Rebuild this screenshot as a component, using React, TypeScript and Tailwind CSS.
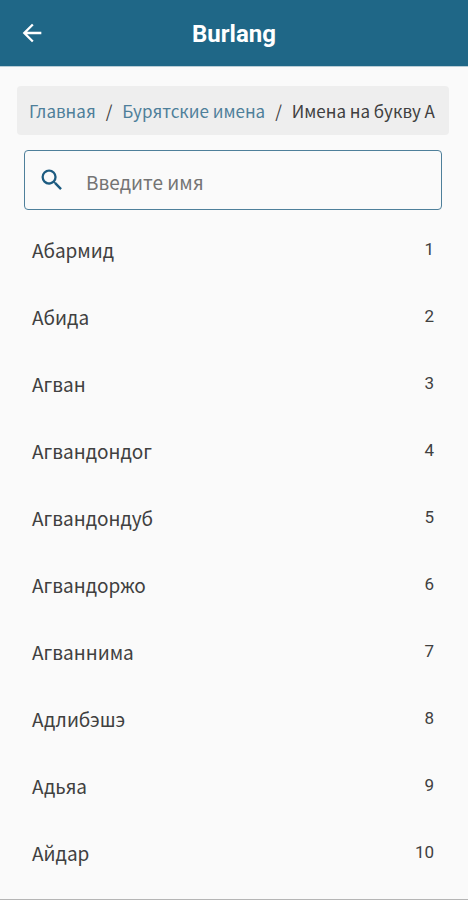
import React from "react";

const names = ["Абармид", "Абида", "Агван", "Агвандондог", "Агвандондуб", "Агвандоржо", "Агваннима", "Адлибэшэ", "Адьяа", "Айдар"];

export default function App() {
  return (
    <div className="min-h-screen overflow-hidden border-b border-[#b5b5b5] bg-[#fafafa] font-['Noto_Sans_CJK_SC','Noto_Sans',sans-serif] text-[#404040]">
      <header className="grid h-[67px] grid-cols-[64px_1fr_64px] items-center border-b border-[#b8cdd6] bg-[#1f6787] text-white">
        <button aria-label="Назад" className="flex h-12 w-16 items-center justify-center">
          <svg className="size-7" viewBox="0 0 24 24" fill="currentColor">
            <path d="M20 11H7.83l5.59-5.59L12 4l-8 8 8 8 1.41-1.41L7.83 13H20v-2z" />
          </svg>
        </button>
        <h1 className="pt-0.5 text-center font-['Roboto',sans-serif] text-2xl font-bold">Burlang</h1>
      </header>
      <main className="pr-[19px] pl-[17px] pt-[19px]">
        <nav aria-label="Навигация" className="flex h-[49px] items-center gap-[10px] whitespace-nowrap rounded bg-[#eeeeee] px-3 text-[17px]">
          <a href="#home" className="text-[#4e7f9a]">Главная</a>
          <span>/</span>
          <a href="#names" className="text-[#4e7f9a]">Бурятские имена</a>
          <span>/</span>
          <span>Имена на букву А</span>
        </nav>
        <label className="mx-[7px] mt-[15px] flex h-[60px] items-center rounded border border-[#4e7f9a] pl-[13px]">
          <svg className="size-7 shrink-0 text-[#1c5b80]" viewBox="0 0 24 24" fill="currentColor" aria-hidden="true">
            <path d="M15.5 14h-.79l-.28-.27A6.47 6.47 0 0 0 16 9.5 6.5 6.5 0 1 0 9.5 16c1.61 0 3.09-.59 4.23-1.57l.27.28v.79l5 4.99L20.49 19l-4.99-5zm-6 0C7.01 14 5 11.99 5 9.5S7.01 5 9.5 5 14 7.01 14 9.5 11.99 14 9.5 14z" />
          </svg>
          <input aria-label="Введите имя" placeholder="Введите имя" className="ml-5 w-full min-w-0 bg-transparent pt-1 text-[19px] outline-none placeholder:text-[#747474]" />
        </label>
        <ul className="mt-[7px]">
          {names.map((name, i) => (
            <li key={name} className="flex h-[67px] items-center justify-between px-[15px]">
              <span className="text-[19px]">{name}</span>
              <span className="pb-0.5 font-['Roboto',sans-serif] text-[17px]">{i + 1}</span>
            </li>
          ))}
        </ul>
      </main>
    </div>
  );
}
